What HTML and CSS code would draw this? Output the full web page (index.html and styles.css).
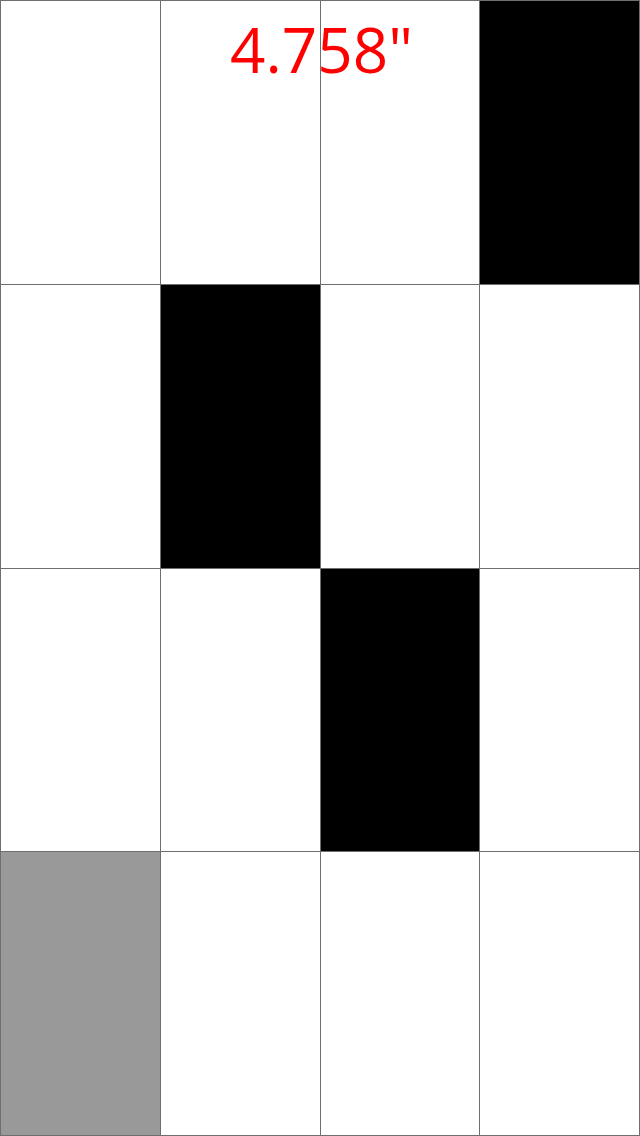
FILE: index.html
```html
<!DOCTYPE html>
<html>
<head>
<meta charset="utf-8">
<link rel="stylesheet" href="styles.css">
</head>
<body>
<div class="screen">
  <div class="timer">4.758"</div>
  <div class="board">
    <div class="cell"></div><div class="cell"></div><div class="cell"></div><div class="cell black"></div>
    <div class="cell"></div><div class="cell black"></div><div class="cell"></div><div class="cell"></div>
    <div class="cell"></div><div class="cell"></div><div class="cell black"></div><div class="cell"></div>
    <div class="cell grey"></div><div class="cell"></div><div class="cell"></div><div class="cell"></div>
  </div>
</div>
</body>
</html>
```
FILE: styles.css
```css
html, body {
  margin: 0;
  padding: 0;
  background: #ffffff;
}
.screen {
  position: relative;
  width: 640px;
  height: 1136px;
  overflow: hidden;
  background: #ffffff;
}
.timer {
  position: absolute;
  top: 0;
  left: 0;
  right: 0;
  z-index: 0;
  text-align: center;
  font-family: "Open Sans", "Noto Sans", sans-serif;
  font-size: 62px;
  line-height: 1;
  padding-top: 18px;
  padding-left: 3px;
  color: #ff0000;
}
.board {
  position: relative;
  z-index: 1;
  box-sizing: border-box;
  width: 640px;
  height: 1136px;
  display: grid;
  grid-template-columns: repeat(4, 1fr);
  grid-template-rows: repeat(4, 1fr);
  border-right: 1px solid #6f6f6f;
  border-bottom: 1px solid #6f6f6f;
}
.cell {
  border-left: 1px solid #6f6f6f;
  border-top: 1px solid #6f6f6f;
  background: transparent;
}
.cell.black {
  background: #000000;
}
.cell.grey {
  background: #999999;
}
```
